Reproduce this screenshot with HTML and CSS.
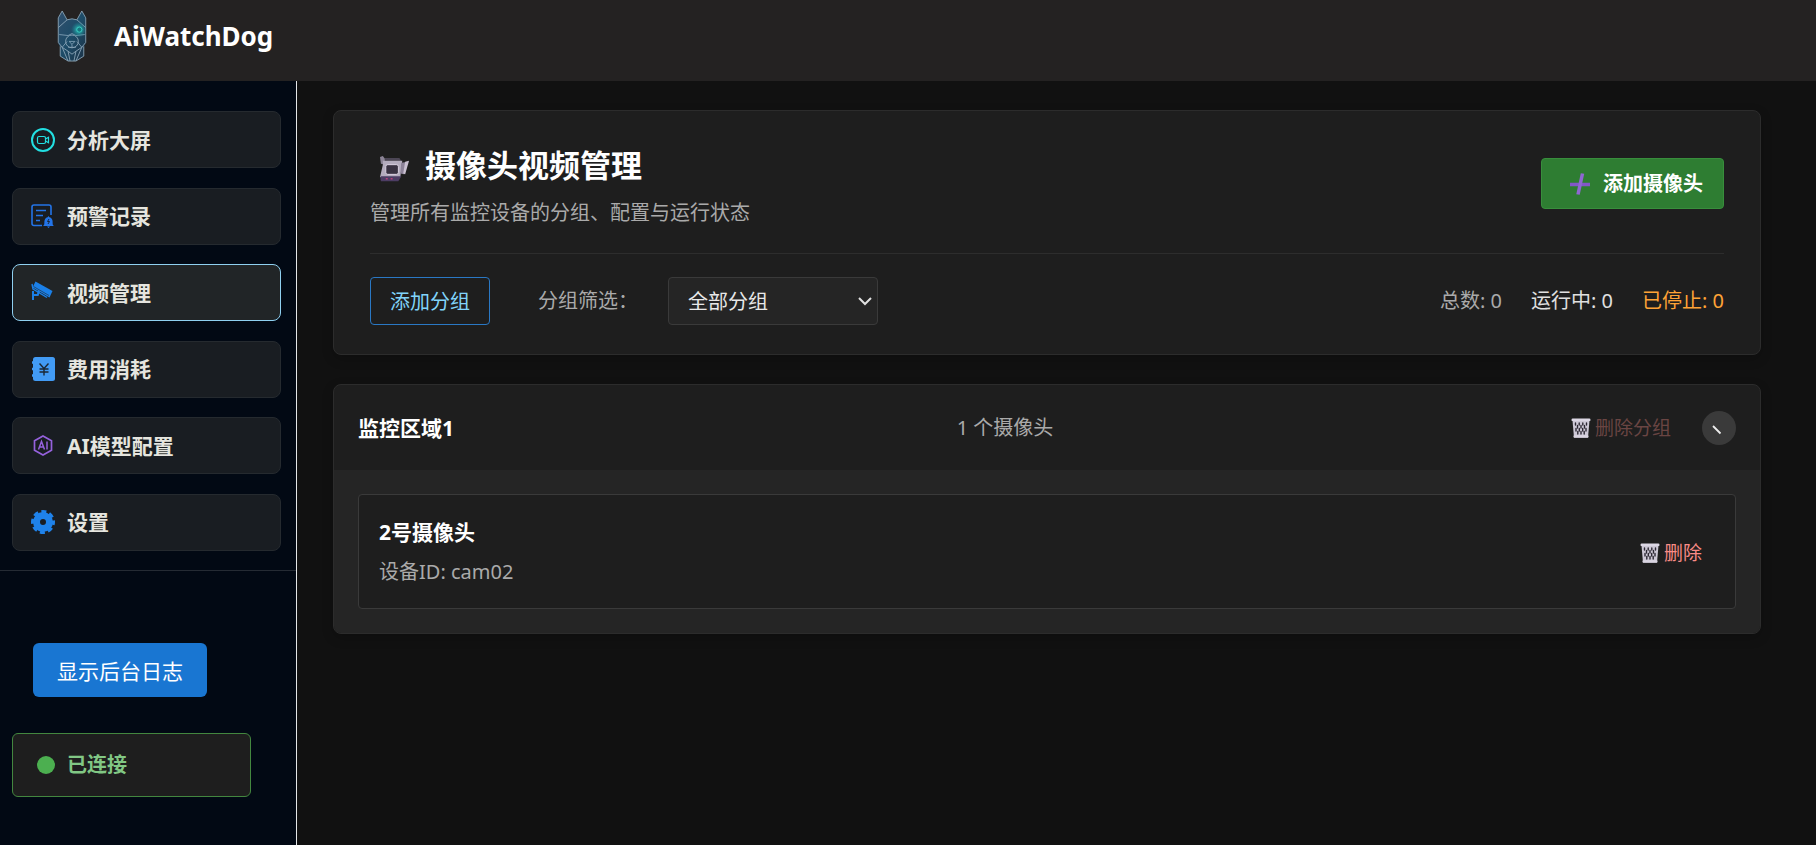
FILE: index.html
```html
<!DOCTYPE html>
<html lang="zh-CN">
<head>
  <meta charset="UTF-8">
  <meta name="viewport" content="width=device-width, initial-scale=1.0">
  <title>AiWatchDog</title>
  <link rel="stylesheet" href="styles.css">
</head>
<body>
  <!-- bin icon, shared by both delete buttons -->
  <svg class="defs" width="0" height="0" aria-hidden="true">
    <defs>
      <symbol id="bin" viewBox="0 0 20 20">
        <path d="M1.500 2.500h17L17 19.500H3z" fill="#cdc8d6"/>
        <path d="M4.500 5v2M8.200 5v2M11.800 5v2M15.500 5v2M6.500 7.500v2.500M10 7.500v2.500M13.500 7.500v2.500M5 10.500v2.500M8.300 10.500v2.500M11.700 10.500v2.500M15 10.500v2.500M6.800 13.500v2.500M10 13.500v2.500M13.200 13.500v2.500" stroke="#2c2833" stroke-width="1.400" stroke-linecap="round"/>
        <rect x="0.500" y="0.500" width="19" height="2.600" rx="1.200" fill="#dcd7e4"/>
        <rect x="2.500" y="17.200" width="15" height="2.500" rx="1" fill="#dad5e2"/>
      </symbol>
    </defs>
  </svg>

  <header class="topbar">
    <svg class="logo" viewBox="0 0 30 54" aria-hidden="true">
      <defs>
        <linearGradient id="fur" x1="0" y1="0" x2="1" y2="1">
          <stop offset="0" stop-color="#31506e"/>
          <stop offset="0.5" stop-color="#1d4c68"/>
          <stop offset="1" stop-color="#1c3145"/>
        </linearGradient>
        <radialGradient id="glow">
          <stop offset="0" stop-color="#35e0cf"/>
          <stop offset="1" stop-color="#1b8f9c" stop-opacity="0"/>
        </radialGradient>
      </defs>
      <path d="M5 1l5 9 5-1 5 1 5-9 4 7v26l-2 4v9l-8 5h-8l-8-5v-9l-2-4V8z" fill="url(#fur)"/>
      <path d="M10 10l5-1 5 1M5 1L1 8v10l9-8-5-9zM25 1l4 7v10l-9-8 5-9zM1 18v15l4 5 6 4 4 3 4-3 6-4 4-5V18M3 37v10l8 5h8l8-5V37M5 38l6 14M25 38l-6 14M11 42l2 10M19 42l-2 10" fill="none" stroke="#8ba6b8" stroke-width="0.900"/>
      <path d="M2 25l9 1 4-2 4 2 9-1M11 38h8M12 32h6l-3 3zM15 35v3M5 38l5-6M25 38l-5-6" fill="none" stroke="#7f9fb4" stroke-width="0.900"/>
      <circle cx="15" cy="32" r="6.500" fill="none" stroke="#8ba6b8" stroke-width="0.900"/>
      <circle cx="22" cy="20" r="8" fill="url(#glow)"/>
      <circle cx="22.500" cy="20" r="2.600" fill="#167681" stroke="#42dccb" stroke-width="0.800"/>
    </svg>
    <span class="brand">AiWatchDog</span>
  </header>

  <div class="layout">
    <aside class="sidebar">
      <nav class="menu">
        <a href="#" class="menu-item">
          <svg class="icon" viewBox="0 0 24 24" fill="none" stroke="#22dfe2">
            <circle cx="12" cy="12" r="11" stroke-width="2"/>
            <rect x="6.500" y="8.500" width="8" height="7" rx="1.500" stroke-width="1.200"/>
            <path d="M14.500 11l3-1.800v5.600l-3-1.800" stroke-width="1.200"/>
          </svg>
          分析大屏
        </a>
        <a href="#" class="menu-item">
          <svg class="icon" viewBox="0 0 24 24" fill="none" stroke="#2374e8" stroke-width="1.600">
            <path d="M11 21.500H3q-2 0-2-2V3q0-2 2-2h15q2 0 2 2v8" />
            <path d="M5 6.500h10M5 11.500h7M5 16.500h4"/>
            <path d="M12 22c2-1 1-3.500 1.600-5.800.5-1.700 1.600-2.700 3-3l.9-1.200.9 1.200c1.400.3 2.500 1.300 3 3C22 18.500 21 21 23 22zM16 22.500h3l-1.500 1.500z" fill="#2374e8" stroke="none"/>
            <path d="M18 15l-1.500 2.500h2L17 20" stroke="#191d22" stroke-width="0.900"/>
          </svg>
          预警记录
        </a>
        <a href="#" class="menu-item active">
          <svg class="icon" viewBox="0 0 24 24" fill="#1b80e8">
            <path d="M4.500.5L21.500 10l-3 6.500L1.500 6.500z"/>
            <path d="M1 3l1 5 14 8.500" fill="none" stroke="#1b80e8" stroke-width="1.400"/>
            <path d="M1 10h2v3h3l1-3.500 2 1-1.500 4.500H3v4H1z"/>
            <path d="M2.500 5.500l15.500 9" stroke="#20272c" stroke-width="0.600"/>
          </svg>
          视频管理
        </a>
        <a href="#" class="menu-item">
          <svg class="icon" viewBox="0 0 24 24">
            <rect x="2" y="0" width="22" height="24" rx="2.500" fill="#429bf5"/>
            <path d="M1 5.500h2.500M1 12h2.500M1 18.500h2.500" stroke="#429bf5" stroke-width="2.500"/>
            <path d="M8.500 6.500l4.500 5 4.500-5M13 11.500v7M8.500 12h9M8.500 15h9" fill="none" stroke="#1b2733" stroke-width="1.400"/>
          </svg>
          费用消耗
        </a>
        <a href="#" class="menu-item">
          <svg class="icon" viewBox="0 0 24 24" fill="none" stroke="#9561dc">
            <path d="M12 2l8.500 4.800v9.400L12 21l-8.500-4.800V6.800z" stroke-width="1.700"/>
            <path d="M7.500 15.500l3-8 3 8M8.500 13h4M16 7.500v8" stroke-width="1.500"/>
          </svg>
          AI模型配置
        </a>
        <a href="#" class="menu-item">
          <svg class="icon" viewBox="0 0 24 24" fill="none">
            <circle cx="12" cy="12" r="6.500" stroke="#1f82ea" stroke-width="7"/>
            <circle cx="12" cy="12" r="10.500" stroke="#1f82ea" stroke-width="3" stroke-dasharray="5 3.247" stroke-dashoffset="2"/>
          </svg>
          设置
        </a>
      </nav>
      <div class="sidebar-bottom">
        <button type="button" class="log-btn">显示后台日志</button>
        <div class="status"><span class="dot"></span><span>已连接</span></div>
      </div>
    </aside>

    <main class="content">
      <section class="panel overview">
        <div class="overview-head">
          <div>
            <h1>
              <svg class="camera" viewBox="0 0 32 32" aria-hidden="true">
                <path d="M6 4h15l2 3H6z" fill="#4c4655"/>
                <path d="M1 3l3-1 2 3v6l-4-1z" fill="#8c8496"/>
                <path d="M4 7h20l-2 17H1l3-13z" fill="#b4acbe"/>
                <path d="M23 9l7-1-4 13-4-1z" fill="#8c8298"/>
                <path d="M27 8l4-1-4 14-2-1z" fill="#c9c0d1"/>
                <path d="M2 23h21l-3 5H2q-1-2 0-5z" fill="#4d3d64"/>
                <rect x="7" y="11" width="13" height="10" rx="2" fill="#393242" stroke="#ded5e5"/>
                <path d="M7 25.500h2M12 25.500h2" stroke="#b8417c" stroke-width="1.500"/>
              </svg>
              摄像头视频管理
            </h1>
            <p class="subtitle">管理所有监控设备的分组、配置与运行状态</p>
          </div>
          <button type="button" class="add-camera">
            <svg class="plus" viewBox="0 0 24 24" aria-hidden="true">
              <path d="M2 12.500h20" stroke="#8257c8" stroke-width="3.500"/>
              <path d="M14.500 1.500L10 22.500" stroke="#8f67d2" stroke-width="3.500"/>
            </svg>
            添加摄像头
          </button>
        </div>
        <div class="toolbar">
          <button type="button" class="add-group">添加分组</button>
          <label for="group">分组筛选：</label>
          <div class="select-wrap">
            <select id="group">
              <option>全部分组</option>
            </select>
            <svg class="arrow" viewBox="0 0 14 9" aria-hidden="true"><path d="M1 1l6 6 6-6" fill="none" stroke="#e0e0e0" stroke-width="2"/></svg>
          </div>
          <div class="stats">
            <span>总数: 0</span>
            <span class="running">运行中: 0</span>
            <span class="stopped">已停止: 0</span>
          </div>
        </div>
      </section>

      <section class="panel group">
        <div class="group-head">
          <h2>监控区域1</h2>
          <span class="count">1 个摄像头</span>
          <div class="group-actions">
            <button type="button" class="delete" disabled>
              <svg class="bin" aria-hidden="true"><use href="#bin"/></svg><span>删除分组</span>
            </button>
            <button type="button" class="toggle" aria-label="展开">
              <svg viewBox="0 0 10 10" aria-hidden="true"><path d="M1 1l7.500 7.500" stroke="#eee" stroke-width="1.800"/></svg>
            </button>
          </div>
        </div>
        <div class="group-body">
          <article class="device">
            <div>
              <h3>2号摄像头</h3>
              <p>设备ID: cam02</p>
            </div>
            <button type="button" class="delete">
              <svg class="bin" aria-hidden="true"><use href="#bin"/></svg><span>删除</span>
            </button>
          </article>
        </div>
      </section>
    </main>
  </div>
</body>
</html>
```
FILE: styles.css
```css
* {
  box-sizing: border-box;
}

body {
  margin: 0;
  min-height: 100vh;
  display: flex;
  flex-direction: column;
  font-family: "Noto Sans", "Noto Sans CJK SC", sans-serif;
  font-size: 20px;
  line-height: 28px;
  background-color: #111;
  color: #fff;
}

h1, h2, h3, p {
  margin: 0;
}

button, select {
  font: inherit;
  cursor: pointer;
}

svg {
  flex-shrink: 0;
}

.defs {
  position: absolute;
}

/* header */
.topbar {
  display: flex;
  align-items: center;
  gap: 27px;
  height: 81px;
  padding: 0 57px 9px;
  background-color: #242222;
}

.logo {
  width: 30px;
  height: 53px;
}

.brand {
  font-size: 26px;
  font-weight: bold;
}

.layout {
  flex: 1;
  display: flex;
}

/* sidebar */
.sidebar {
  width: 297px;
  flex-shrink: 0;
  background-color: #020914;
  border-right: 1px solid #e4e6e8;
}

.menu {
  display: flex;
  flex-direction: column;
  justify-content: space-between;
  height: 490px;
  padding: 30px 15px 19px 12px;
  border-bottom: 1px solid #252b34;
}

.menu-item {
  display: flex;
  align-items: center;
  gap: 12px;
  height: 57px;
  padding: 0 18px;
  font-size: 21px;
  font-weight: bold;
  color: #e5e5df;
  text-decoration: none;
  background-color: #191d22;
  border: 1px solid #252a2f;
  border-radius: 8px;
}

.menu-item.active {
  background-color: #212527;
  border-color: #8fd0f0;
}

.icon {
  width: 24px;
  height: 24px;
}

.sidebar-bottom {
  display: flex;
  flex-direction: column;
  align-items: flex-start;
  gap: 36px;
  padding: 72px 12px 48px;
}

.log-btn {
  height: 54px;
  margin-left: 21px;
  padding: 2px 24px 0;
  font-size: 21px;
  color: #fff;
  background-color: #1976d2;
  border: none;
  border-radius: 6px;
}

.status {
  display: flex;
  align-items: center;
  gap: 12px;
  width: 239px;
  height: 64px;
  padding: 0 24px;
  font-weight: bold;
  color: #81c784;
  background-color: #1e1e1e;
  border: 1px solid #43873f;
  border-radius: 6px;
}

.dot {
  width: 18px;
  height: 18px;
  border-radius: 50%;
  background-color: #4caf50;
}

/* content */
.content {
  flex: 1;
  padding: 29px 55px 29px 36px;
}

.panel {
  background-color: #1e1e1e;
  border: 1px solid #2c2c2c;
  border-radius: 8px;
  box-shadow: 0 4px 12px rgba(0, 0, 0, 0.2);
}

.overview {
  margin-bottom: 29px;
  padding: 24px 36px 29px;
}

.overview-head {
  display: flex;
  justify-content: space-between;
  align-items: center;
  padding-bottom: 22px;
  border-bottom: 1px solid #2d2d2d;
}

h1 {
  display: flex;
  align-items: center;
  gap: 15px;
  padding-left: 9px;
  font-size: 31px;
  line-height: 60px;
}

.camera {
  width: 31px;
  height: 31px;
  margin-top: 8px;
}

.subtitle {
  line-height: 36px;
  color: #aaa;
}

.add-camera {
  display: flex;
  align-items: center;
  gap: 11px;
  height: 51px;
  padding: 2px 20px 0 26px;
  font-weight: bold;
  color: #fff;
  background-color: #2e7d32;
  border: 1px solid #388e3c;
  border-radius: 4px;
}

.plus {
  width: 24px;
  height: 24px;
}

.toolbar {
  display: flex;
  align-items: center;
  padding-top: 23px;
}

.add-group {
  width: 120px;
  height: 48px;
  margin-right: 48px;
  padding: 2px 0 0;
  color: #81d4fa;
  background-color: transparent;
  border: 1px solid #2a78c4;
  border-radius: 4px;
}

.toolbar label {
  margin-right: 30px;
  color: #aaa;
}

.select-wrap {
  position: relative;
  width: 210px;
}

.select-wrap select {
  width: 100%;
  height: 48px;
  padding: 2px 19px 0;
  appearance: none;
  color: #e8e8e8;
  background-color: #252525;
  border: 1px solid #3a3a3a;
  border-radius: 4px;
}

.arrow {
  position: absolute;
  right: 6px;
  top: 20px;
  width: 14px;
  height: 9px;
  pointer-events: none;
}

.stats {
  display: flex;
  gap: 29px;
  margin-left: auto;
  color: #aaa;
}

.stats .running {
  color: #e0e0e0;
}

.stats .stopped {
  color: #ffa336;
}

/* camera group */
.group {
  overflow: hidden;
}

.group-head {
  display: flex;
  justify-content: space-between;
  align-items: center;
  height: 85px;
  padding: 0 24px;
}

h2, h3 {
  font-size: 21px;
}

.count {
  color: #aaa;
}

.group-actions {
  display: flex;
  align-items: center;
  gap: 16px;
}

.delete {
  display: flex;
  align-items: center;
  gap: 4px;
  padding: 6px 15px;
  font-size: 19px;
  color: #f98b86;
  background: none;
  border: none;
}

.delete:disabled {
  color: #6a4543;
  cursor: default;
}

.bin {
  width: 20px;
  height: 20px;
}

.toggle {
  display: flex;
  align-items: center;
  justify-content: center;
  width: 34px;
  height: 34px;
  padding: 4px 4px 0 0;
  background-color: #3a3a3a;
  border: none;
  border-radius: 50%;
}

.toggle svg {
  width: 10px;
  height: 10px;
}

.group-body {
  padding: 24px;
  background-color: #252525;
}

.device {
  display: flex;
  justify-content: space-between;
  align-items: center;
  padding: 18px 18px 15px 20px;
  background-color: #1e1e1e;
  border: 1px solid #3a3a3a;
  border-radius: 4px;
}

.device h3 {
  line-height: 38px;
}

.device p {
  line-height: 42px;
  color: #aaa;
}
```
